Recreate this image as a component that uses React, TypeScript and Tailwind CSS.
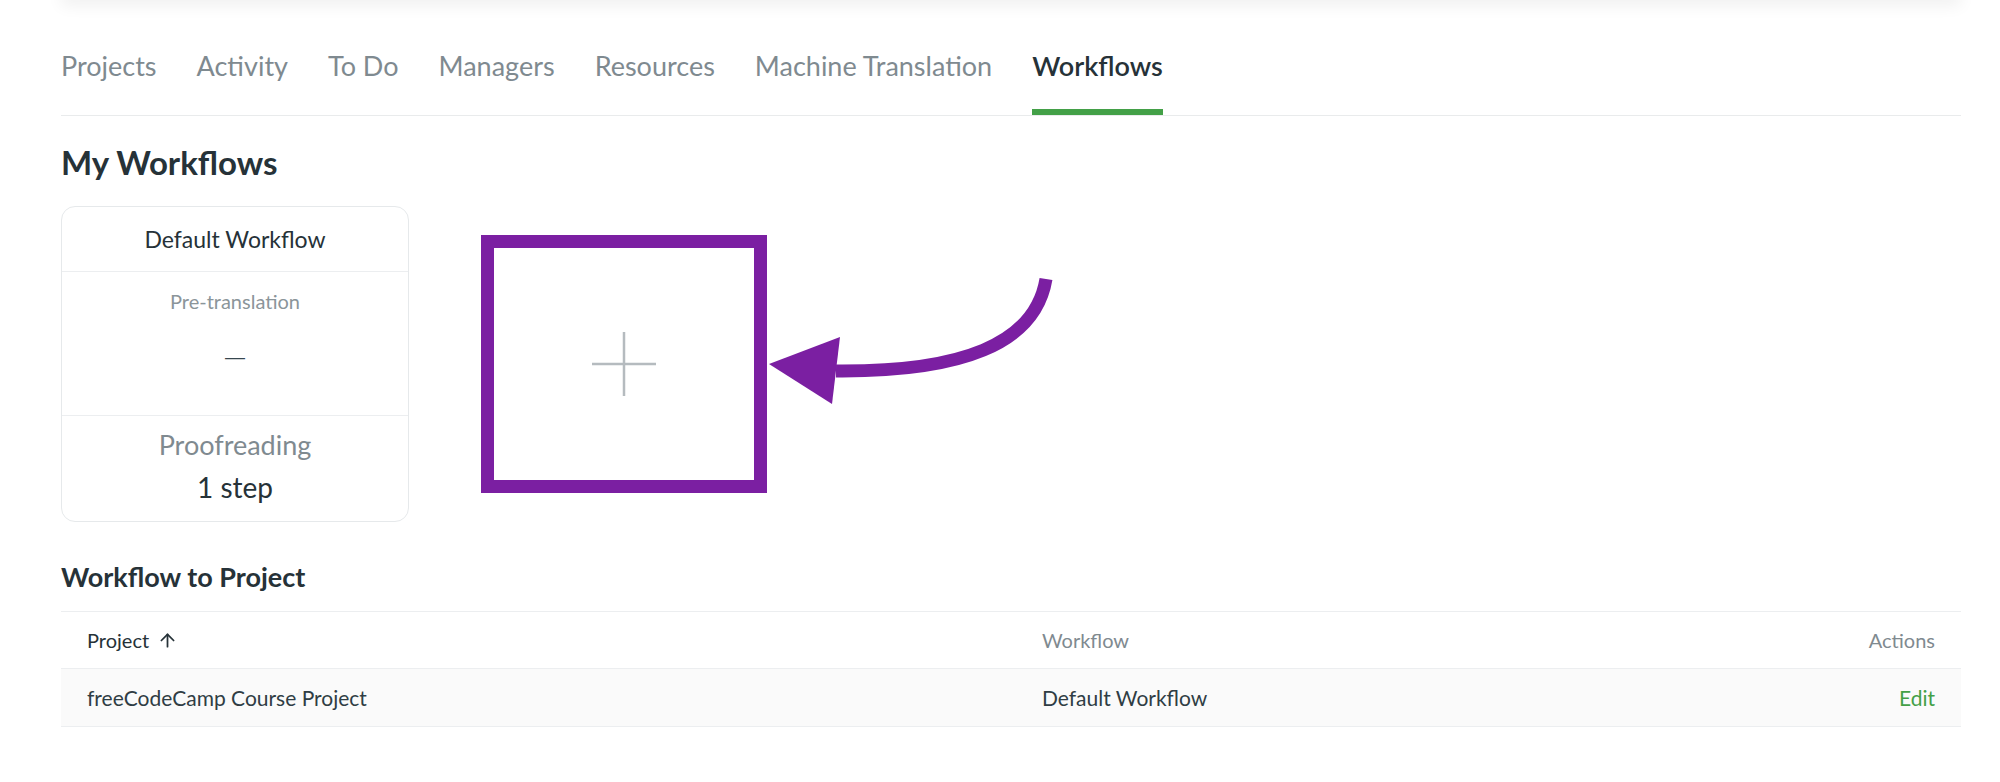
import { ArrowUp } from 'lucide-react'

const tabs = ['Projects', 'Activity', 'To Do', 'Managers', 'Resources', 'Machine Translation', 'Workflows']

const App = () => {
  return (
    <div className="relative min-h-[782px] overflow-hidden bg-white font-['Lato',sans-serif] text-[#263238]">
      {/* header shadow peeking in at the top */}
      <div className="absolute left-[61px] right-[39px] -top-5 h-5 shadow-[0_6px_16px_rgba(0,0,0,0.06)]" />

      <div className="ml-[61px] w-[1900px]">
        <nav className="flex gap-[40px] border-b border-[#e9ebec] pt-[48px]">
          {tabs.map((tab) => (
            <div
              key={tab}
              className={
                tab === 'Workflows'
                  ? 'border-b-[6px] border-[#43a047] pb-[25px] text-[27px] font-semibold leading-[36px] text-[#263238]'
                  : 'border-b-[6px] border-transparent pb-[25px] text-[27px] leading-[36px] text-[#7f8a90]'
              }
            >
              {tab}
            </div>
          ))}
        </nav>

        <h1 className="mt-[26px] text-[33px] font-bold leading-[40px]">My Workflows</h1>

        <div className="mt-[24px] flex items-start gap-[72px]">
          <div className="flex h-[316px] w-[348px] flex-col rounded-[14px] border border-[#e6e9eb] text-center">
            <div className="flex h-[65px] items-center justify-center border-b border-[#eceef0] text-[23px]">
              Default Workflow
            </div>
            <div className="flex h-[144px] flex-col items-center border-b border-[#eceef0]">
              <div className="mt-[15px] text-[20px] leading-[28px] text-[#8b959a]">Pre-translation</div>
              <div className="mt-[28px] font-['Liberation_Sans',sans-serif] text-[20px] leading-[28px] text-[#37474f]">—</div>
            </div>
            <div className="flex flex-1 flex-col items-center pt-[11px]">
              <div className="text-[27px] leading-[36px] text-[#7f8a90]">Proofreading</div>
              <div className="mt-[6px] text-[28px] leading-[36px]">1 step</div>
            </div>
          </div>

          <div className="mt-[29px] flex h-[258px] w-[286px] items-center justify-center border-[13px] border-[#7b1fa2] bg-white">
            <svg width="64" height="64" viewBox="0 0 64 64">
              <line x1="0" y1="32" x2="64" y2="32" stroke="#b5bbbf" strokeWidth="2.5" />
              <line x1="32" y1="0" x2="32" y2="64" stroke="#b5bbbf" strokeWidth="2.5" />
            </svg>
          </div>
        </div>

        <h2 className="mt-[38px] text-[27px] font-bold leading-[34px]">Workflow to Project</h2>

        <div className="mt-[17px] border-t border-[#eceef0]">
          <div className="grid h-[57px] grid-cols-[955px_1fr_auto] items-center border-b border-[#eceef0] px-[26px] text-[20px]">
            <div className="flex items-center gap-[8px] text-[#263238]">
              Project
              <ArrowUp size={21} strokeWidth={2} />
            </div>
            <div className="text-[#7f8a90]">Workflow</div>
            <div className="text-right text-[#7f8a90]">Actions</div>
          </div>
          <div className="grid h-[58px] grid-cols-[955px_1fr_auto] items-center border-b border-[#eceef0] bg-[#fafafa] px-[26px] text-[21px] text-[#2f3d44]">
            <div>freeCodeCamp Course Project</div>
            <div>Default Workflow</div>
            <div className="text-right text-[#43a047]">Edit</div>
          </div>
        </div>
      </div>

      {/* annotation arrow */}
      <svg className="pointer-events-none absolute left-0 top-0" width="2000" height="782">
        <path d="M1046 279 C1035 345 960 372 836 371" fill="none" stroke="#7b1fa2" strokeWidth="13" />
        <polygon points="769,364 840,337 832,404" fill="#7b1fa2" />
      </svg>
    </div>
  )
}

export default App
